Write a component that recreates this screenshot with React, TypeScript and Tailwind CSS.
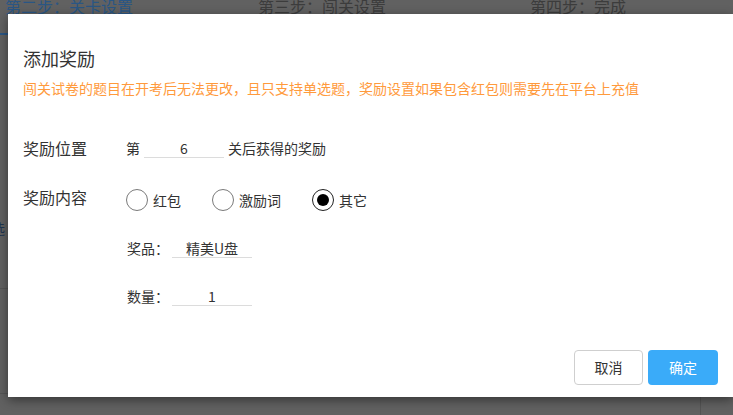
import { useState } from 'react';

// Reward type options shown as radio buttons
const rewardTypes = ['红包', '激励词', '其它'];

function Radio({ label, checked, onClick }: { label: string; checked: boolean; onClick: () => void }) {
  return (
    <button type="button" onClick={onClick} className="mr-[31px] flex items-center">
      <span
        className={
          checked
            ? 'flex h-[22px] w-[22px] items-center justify-center rounded-full border border-[#222] bg-white'
            : 'flex h-[22px] w-[22px] items-center justify-center rounded-full border border-[#7a7a7a] bg-white'
        }
      >
        {checked && <span className="h-[12px] w-[12px] rounded-full bg-black" />}
      </span>
      <span className="ml-[5px] text-[14px] leading-[22px] text-[#333]">{label}</span>
    </button>
  );
}

function LineInput({ value }: { value: string }) {
  return (
    <div className="h-[19px] w-[80px] border-b border-[#dcdcdc] text-center text-[14px] leading-[18px] text-[#333]">
      {value}
    </div>
  );
}

export default function App() {
  const [type, setType] = useState(2);

  return (
    <div
      className="relative h-[415px] w-[733px] overflow-hidden bg-[#616161]"
      style={{ fontFamily: '"Noto Sans CJK SC", "Microsoft YaHei", sans-serif' }}
    >
      {/* dimmed page behind the modal */}
      <div className="-mt-[3px] flex h-[36px] text-[16px] leading-[18px]">
        <div className="w-[258px] pl-[5px] text-[#2a5684]">第二步：关卡设置</div>
        <div className="w-[272px] text-[#3c3c3c]">第三步：闯关设置</div>
        <div className="text-[#3c3c3c]">第四步：完成</div>
      </div>
      <div className="h-[2px] w-[140px] bg-[#2a5684]" />
      <div className="mt-[185px] -ml-[9px] text-[14px] leading-[16px] text-[#1e3550]">选</div>
      <div className="mt-[52px] h-px w-full bg-[#555]" />
      <div className="mt-[104px] h-px w-full bg-[#555]" />
      <div className="ml-[700px] h-[30px] w-px bg-[#545454]" />

      {/* modal */}
      <div className="absolute top-[14px] left-[8px] flex h-[383px] w-[725px] flex-col bg-white pt-[32px] pr-[15px] pl-[15px] shadow-[0_3px_10px_rgba(0,0,0,0.45)]">
        <div className="text-[18px] leading-[24px] text-[#333]">添加奖励</div>
        <div className="mt-[8px] text-[14px] leading-[20px] text-[#ff9a3c]">
          闯关试卷的题目在开考后无法更改，且只支持单选题，奖励设置如果包含红包则需要先在平台上充值
        </div>

        <div className="mt-[38px] flex h-[24px] items-center">
          <div className="w-[103px] text-[16px] text-[#333]">奖励位置</div>
          <span className="mr-[4px] text-[14px] text-[#333]">第</span>
          <LineInput value="6" />
          <span className="ml-[4px] text-[14px] text-[#333]">关后获得的奖励</span>
        </div>

        <div className="mt-[28px] flex h-[24px] items-center">
          <div className="mb-[7px] w-[103px] text-[16px] text-[#333]">奖励内容</div>
          {rewardTypes.map((t, i) => (
            <Radio key={t} label={t} checked={type === i} onClick={() => setType(i)} />
          ))}
        </div>

        <div className="mt-[24px] flex h-[24px] items-center pl-[104px]">
          <span className="w-[45px] text-[14px] text-[#333]">奖品：</span>
          <LineInput value="精美U盘" />
        </div>

        <div className="mt-[24px] flex h-[24px] items-center pl-[104px]">
          <span className="w-[45px] text-[14px] text-[#333]">数量：</span>
          <LineInput value="1" />
        </div>

        <div className="mt-[42px] flex justify-end gap-[5px]">
          <button className="h-[35px] w-[69px] rounded-[4px] border border-[#cfcfcf] bg-white text-[14px] text-[#333]">
            取消
          </button>
          <button className="h-[35px] w-[70px] rounded-[4px] bg-[#3aabf9] text-[14px] text-white">确定</button>
        </div>
      </div>
    </div>
  );
}
